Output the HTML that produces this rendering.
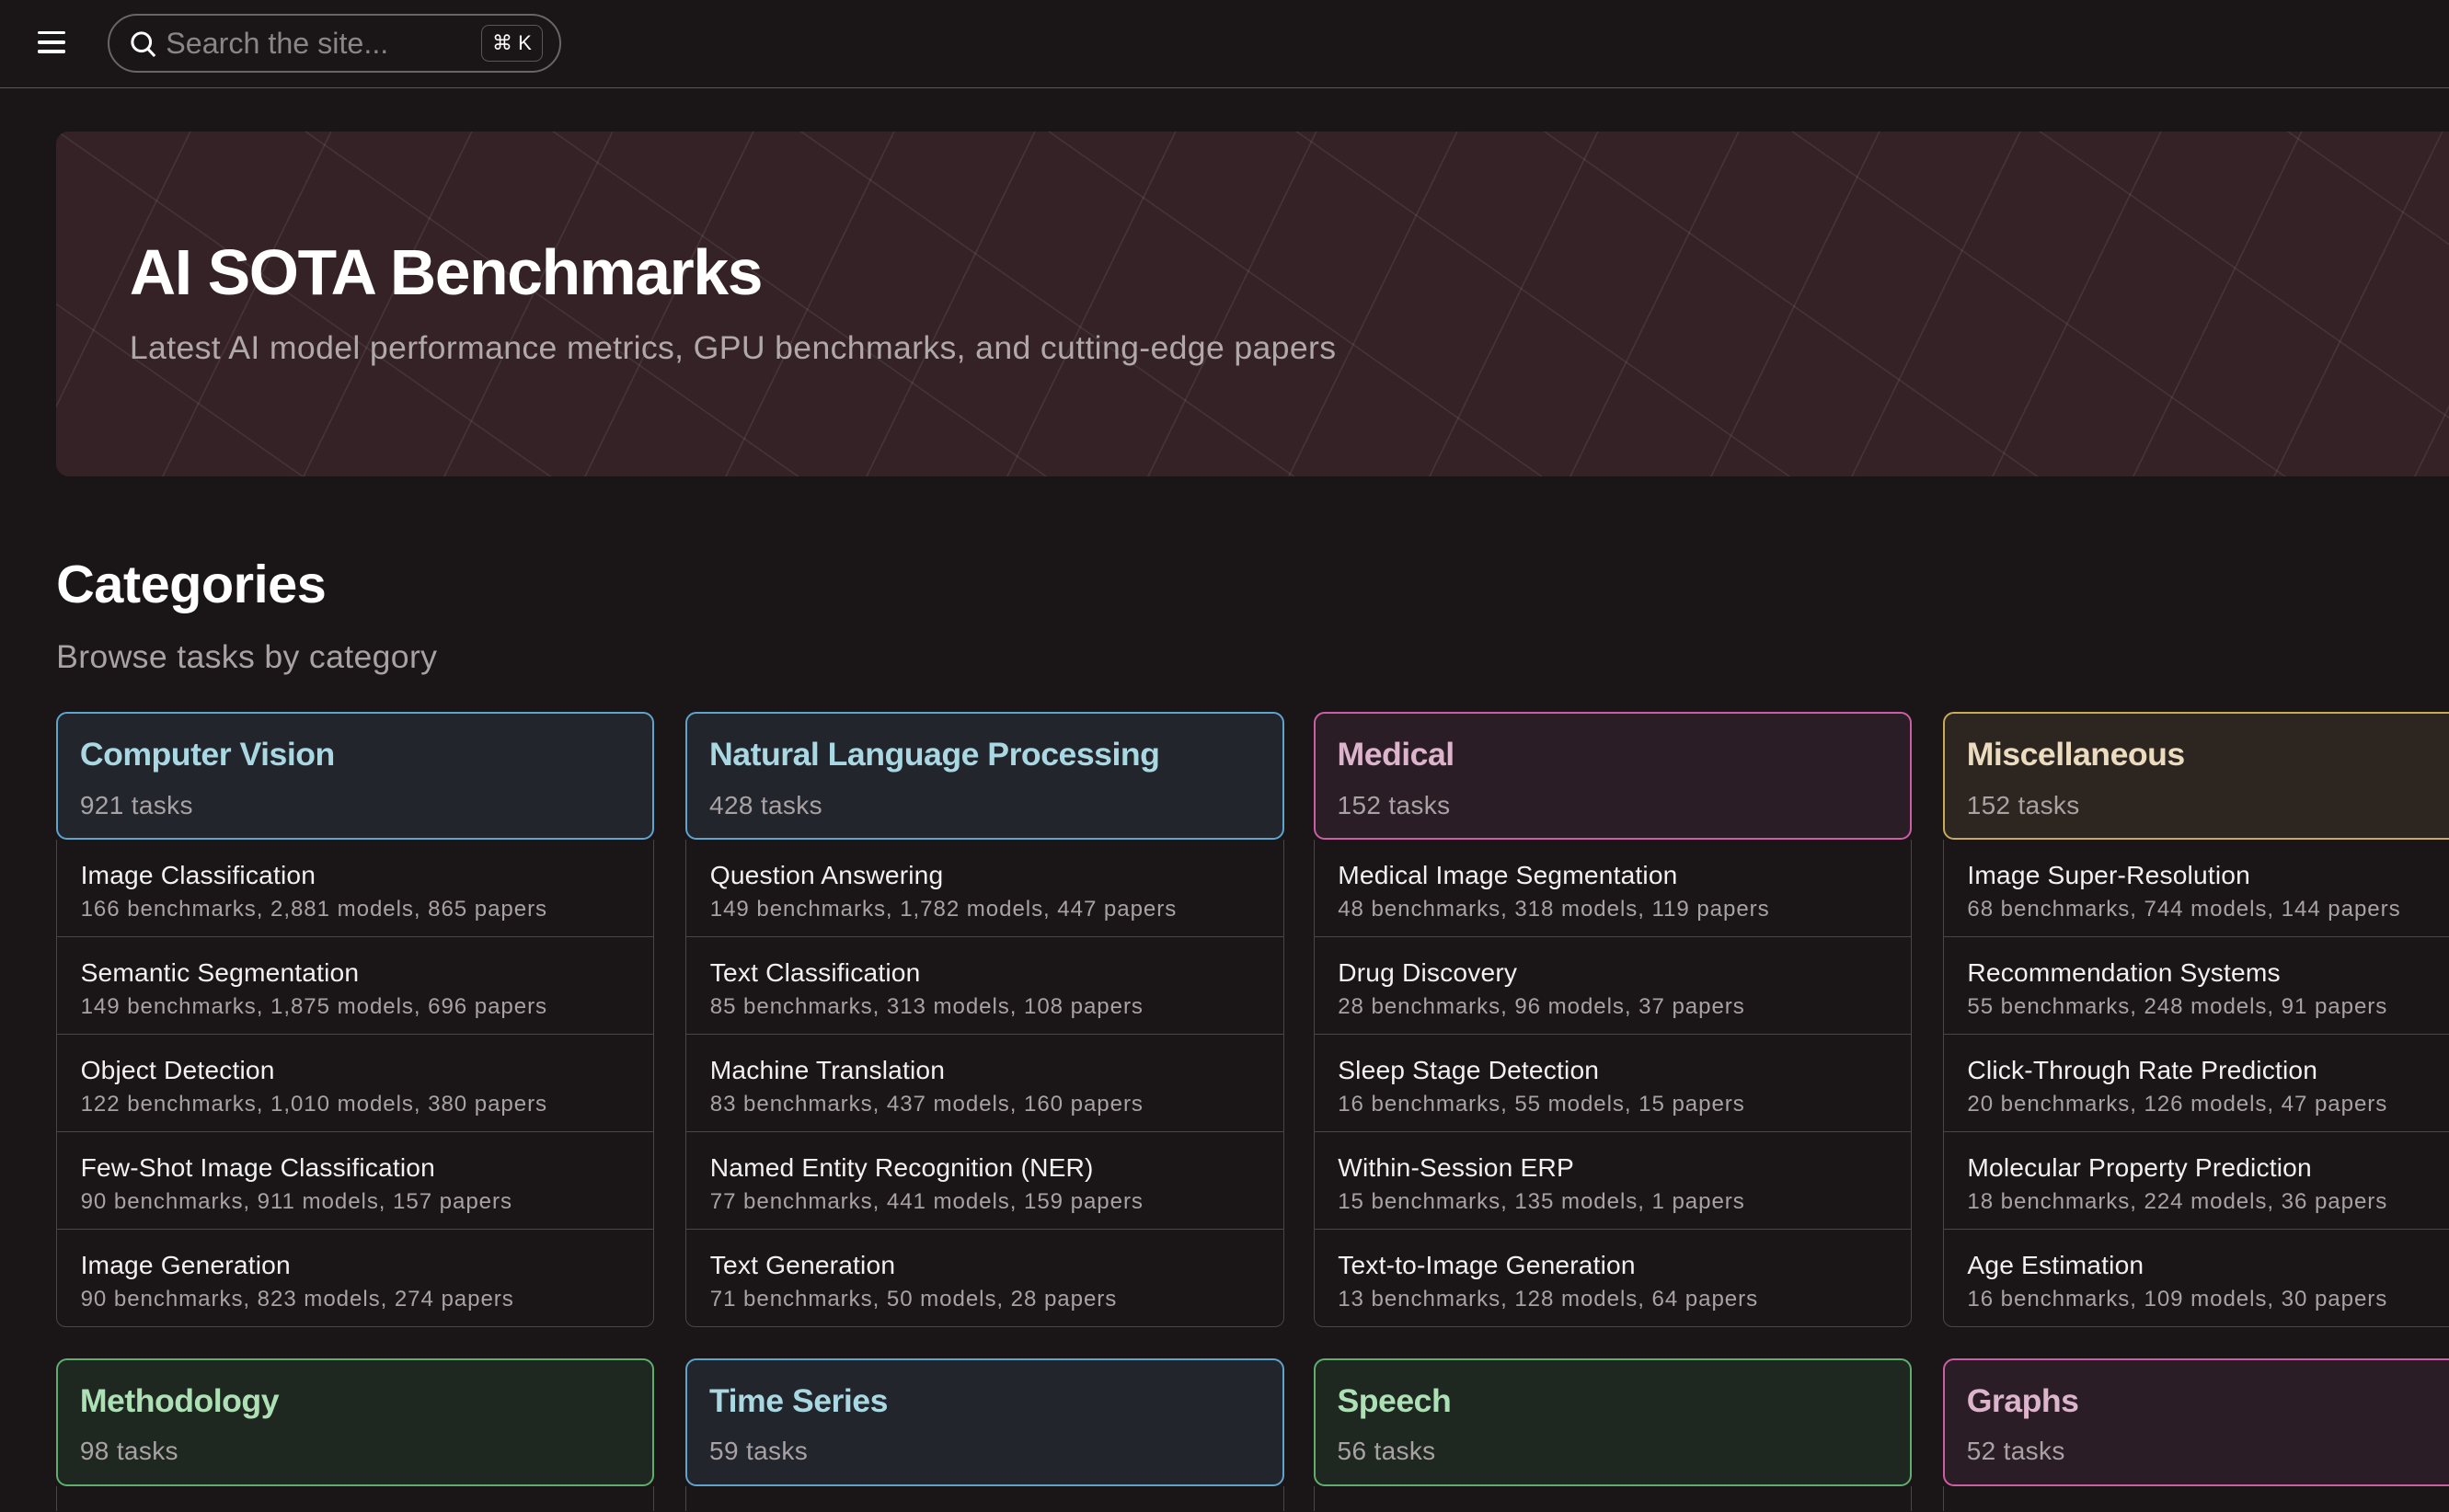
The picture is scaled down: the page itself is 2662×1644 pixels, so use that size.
<!DOCTYPE html>
<html><head><meta charset="utf-8"><style>
html,body{margin:0;padding:0;background:#1a1516;overflow:hidden}
body{width:2662px;height:1644px;font-family:"Liberation Sans",sans-serif;color:#eee}
#z{zoom:1.69770408;width:1568px;height:968px;position:relative;overflow:hidden}
.hdr{position:absolute;left:0;top:0;width:1568px;height:56px;border-bottom:1px solid #5a5556}
.ham{position:absolute;left:24px;top:20px;width:18px}
.ham i{display:block;height:2px;background:#fff;margin-bottom:4px;border-radius:1px}
.search{position:absolute;left:69px;top:9px;width:288px;height:35px;border:1.5px solid #6a6466;border-radius:19px}
.search svg{position:absolute;left:13px;top:9px}
.search span.ph{position:absolute;left:36px;top:7px;font-size:19px;color:#8a8587}
.kbd{position:absolute;left:238px;top:6px;width:38px;height:22px;border:1px solid #5a5556;border-radius:5px;font-size:13px;color:#fff;text-align:center;line-height:22px}
.hero{position:absolute;left:36px;top:84px;width:1600px;height:221px;border-radius:8px;background-color:#352227;
background-image:repeating-linear-gradient(-64deg,transparent 0 80px,rgba(255,255,255,.08) 80px 81px),repeating-linear-gradient(35deg,transparent 0 90px,rgba(255,255,255,.07) 90px 91px)}
.hero h1{position:absolute;left:47px;top:67px;margin:0;font-size:41px;font-weight:bold;color:#fff;letter-spacing:-.8px}
.hero p{position:absolute;left:47px;top:127px;margin:0;font-size:21px;color:#b0a8aa;letter-spacing:.2px}
h2{position:absolute;left:36px;top:355px;margin:0;font-size:34px;font-weight:bold;color:#fff;letter-spacing:-.3px}
.sub{position:absolute;left:36px;top:409px;font-size:21px;color:#a8a2a4;letter-spacing:.2px}
.card{position:absolute;width:383px}
.ch{border:1.5px solid;border-radius:7px;box-sizing:border-box;height:82px;padding:14px 14px}
.ch b{display:block;font-size:21px;font-weight:bold;letter-spacing:-.3px}
.ch span{display:block;margin-top:11px;font-size:16.5px;color:#a8a2a4;letter-spacing:.2px}
.it{height:62.4px;box-sizing:border-box;border:1px solid #4a4547;border-top:none;padding:13px 15px 0}
.it:last-child{border-radius:0 0 6px 6px}
.it div{font-size:16.6px;color:#f2f0f0;letter-spacing:.1px}
.it small{display:block;font-size:14.2px;color:#a8a2a4;margin-top:4px;letter-spacing:.55px}
.b{border-color:#5fa4cc!important;background:#22252b}.b b{color:#a9d8e2}
.p{border-color:#cc5fa4!important;background:#2b1d25}.p b{color:#dcb4cc}
.y{border-color:#c8aa58!important;background:#2d2520}.y b{color:#ebdcc0}
.g{border-color:#5fae70!important;background:#1f2820}.g b{color:#aee0b6}
</style></head><body><div id="z">
<div class="hdr">
<div class="ham"><i></i><i></i><i></i></div>
<div class="search"><svg width="18" height="18" viewBox="0 0 18 18"><circle cx="7.5" cy="7.5" r="5.8" fill="none" stroke="#fff" stroke-width="1.8"/><path d="M11.6 11.8L16 16.5" stroke="#fff" stroke-width="1.8"/></svg><span class="ph">Search the site...</span><div class="kbd">⌘ K</div></div>
</div>
<div class="hero"><h1>AI SOTA Benchmarks</h1><p>Latest AI model performance metrics, GPU benchmarks, and cutting-edge papers</p></div>
<h2>Categories</h2>
<div class="sub">Browse tasks by category</div>

<div class="card" style="left:36px;top:456px"><div class="ch b"><b>Computer Vision</b><span>921 tasks</span></div>
<div class="it"><div>Image Classification</div><small>166 benchmarks, 2,881 models, 865 papers</small></div>
<div class="it"><div>Semantic Segmentation</div><small>149 benchmarks, 1,875 models, 696 papers</small></div>
<div class="it"><div>Object Detection</div><small>122 benchmarks, 1,010 models, 380 papers</small></div>
<div class="it"><div>Few-Shot Image Classification</div><small>90 benchmarks, 911 models, 157 papers</small></div>
<div class="it"><div>Image Generation</div><small>90 benchmarks, 823 models, 274 papers</small></div></div>

<div class="card" style="left:439px;top:456px"><div class="ch b"><b>Natural Language Processing</b><span>428 tasks</span></div>
<div class="it"><div>Question Answering</div><small>149 benchmarks, 1,782 models, 447 papers</small></div>
<div class="it"><div>Text Classification</div><small>85 benchmarks, 313 models, 108 papers</small></div>
<div class="it"><div>Machine Translation</div><small>83 benchmarks, 437 models, 160 papers</small></div>
<div class="it"><div>Named Entity Recognition (NER)</div><small>77 benchmarks, 441 models, 159 papers</small></div>
<div class="it"><div>Text Generation</div><small>71 benchmarks, 50 models, 28 papers</small></div></div>

<div class="card" style="left:841px;top:456px"><div class="ch p"><b>Medical</b><span>152 tasks</span></div>
<div class="it"><div>Medical Image Segmentation</div><small>48 benchmarks, 318 models, 119 papers</small></div>
<div class="it"><div>Drug Discovery</div><small>28 benchmarks, 96 models, 37 papers</small></div>
<div class="it"><div>Sleep Stage Detection</div><small>16 benchmarks, 55 models, 15 papers</small></div>
<div class="it"><div>Within-Session ERP</div><small>15 benchmarks, 135 models, 1 papers</small></div>
<div class="it"><div>Text-to-Image Generation</div><small>13 benchmarks, 128 models, 64 papers</small></div></div>

<div class="card" style="left:1244px;top:456px"><div class="ch y"><b>Miscellaneous</b><span>152 tasks</span></div>
<div class="it"><div>Image Super-Resolution</div><small>68 benchmarks, 744 models, 144 papers</small></div>
<div class="it"><div>Recommendation Systems</div><small>55 benchmarks, 248 models, 91 papers</small></div>
<div class="it"><div>Click-Through Rate Prediction</div><small>20 benchmarks, 126 models, 47 papers</small></div>
<div class="it"><div>Molecular Property Prediction</div><small>18 benchmarks, 224 models, 36 papers</small></div>
<div class="it"><div>Age Estimation</div><small>16 benchmarks, 109 models, 30 papers</small></div></div>

<div class="card" style="left:36px;top:870px"><div class="ch g"><b>Methodology</b><span>98 tasks</span></div><div class="it"><div>Object Counting</div><small>.</small></div></div>
<div class="card" style="left:439px;top:870px"><div class="ch b"><b>Time Series</b><span>59 tasks</span></div><div class="it"><div>Time Series Forecasting</div><small>.</small></div></div>
<div class="card" style="left:841px;top:870px"><div class="ch g"><b>Speech</b><span>56 tasks</span></div><div class="it"><div>Speech Recognition</div><small>.</small></div></div>
<div class="card" style="left:1244px;top:870px"><div class="ch p"><b>Graphs</b><span>52 tasks</span></div><div class="it"><div>Node Classification</div><small>.</small></div></div>
</div></body></html>
